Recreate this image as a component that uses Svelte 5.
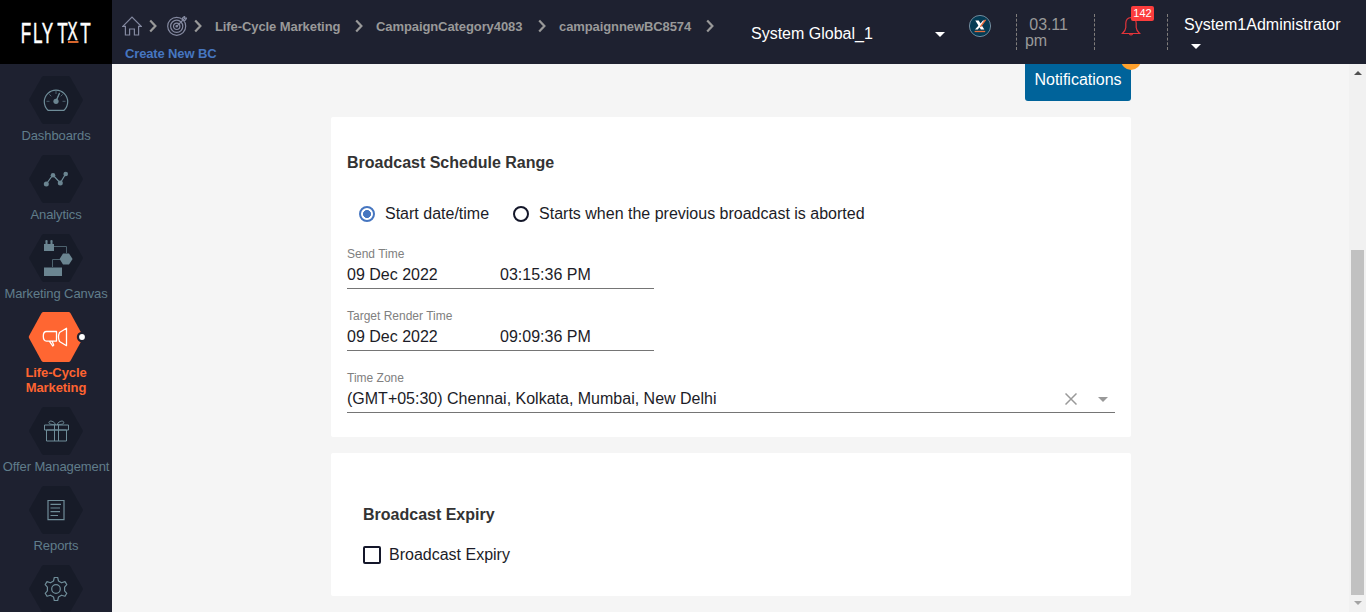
<script>
  const crumbs = [
    { label: 'Life-Cycle Marketing', width: 125 },
    { label: 'CampaignCategory4083', width: 147 },
    { label: 'campaignnewBC8574', width: 132 }
  ];
  const items = [
    { id: 'dash', label: 'Dashboards' },
    { id: 'analytics', label: 'Analytics' },
    { id: 'canvas', label: 'Marketing Canvas' },
    { id: 'life', label: 'Life-Cycle Marketing', active: true },
    { id: 'offer', label: 'Offer Management' },
    { id: 'reports', label: 'Reports' },
    { id: 'settings', label: '' }
  ];
  const times = [
    { label: 'Send Time', date: '09 Dec 2022', time: '03:15:36 PM' },
    { label: 'Target Render Time', date: '09 Dec 2022', time: '09:09:36 PM' }
  ];
</script>

{#snippet chevron()}
  <svg class="chev" width="8" height="14" viewBox="0 0 8 14"><path d="M1.2 1.5 6.4 7 1.2 12.5" /></svg>
{/snippet}

<div class="app">
  <header>
    <div class="logo">
      <svg width="112" height="64" viewBox="0 0 112 64" role="img" aria-label="FLYTXT">
        <text transform="scale(.58 1)" y="43" x="35.9 57 71.9 98.6 116.4 138.3" fill="#fff" stroke="#fff" stroke-width=".5" font-family="Liberation Sans" font-size="29.5">FLYT<tspan y="40" font-size="26">X</tspan><tspan y="43">T</tspan></text>
        <rect x="68" y="41" width="10.5" height="2" fill="#d8662c" />
      </svg>
    </div>
    <nav class="crumbs">
      <div class="trail">
        <svg class="home" width="20" height="20" viewBox="0 0 20 20"><path d="M.8 10.3 10 1l9.2 9.3H16.6V19H12.4V13H7.6v6H3.4V10.3Z" /></svg>
        {@render chevron()}
        <svg class="target" width="20" height="20" viewBox="0 0 20 20"><circle cx="9.7" cy="10.3" r="9" /><circle cx="9.7" cy="10.3" r="6.1" /><circle cx="9.7" cy="10.3" r="3.2" /><circle cx="9.7" cy="10.3" r=".7" /><path d="M9.7 10.3 18 2M15.5 4.2V2L17.6.3V2.2H19.6L18 4.5H15.5" /></svg>
        {@render chevron()}
        {#each crumbs as c}
          <span class="crumb" style:width="{c.width}px">{c.label}</span>
          {@render chevron()}
        {/each}
      </div>
      <div class="current">Create New BC</div>
    </nav>
    <div class="scope"><span>System Global_1</span><i class="caret"></i></div>
    <svg class="badge-x" width="24" height="24" viewBox="0 0 24 24">
      <circle cx="12" cy="12" r="10.6" fill="#043b54" stroke="#70899b" />
      <path d="M7.3 6.5H10.7L16.3 15.5H12.9Z" fill="#fff" />
      <path d="M7 15.5 15 6.5H17.5L9.7 15.5Z" fill="#fff" />
      <path d="M11.8 12.5 16.6 5.8h1.8l-5.4 7.5Z" fill="#e56c3d" />
      <path d="M6.6 17.5H17.2" stroke="#e56c3d" stroke-width="1.3" />
    </svg>
    <div class="clock">&nbsp;03.11 pm</div>
    <div class="bell">
      <svg width="20" height="21" viewBox="0 0 20 21"><path d="M10 1.5C6.5 1.8 4.9 4 4.8 7.3V11.5Q4.7 14.2 1.4 17.5H18.6Q15.3 14.2 15.2 11.5V7.3C15.1 4 13.5 1.8 10 1.5ZM8.4 17.8q1.6 2.4 3.2 0" /></svg>
      <span>142</span>
    </div>
    <div class="user"><span>System1Administrator</span><i class="caret"></i></div>
  </header>

  <div class="body">
    <aside>
      {#each items as it}
        <div class="item" class:active={it.active}>
          <svg class="hex" width="56" height="50" viewBox="0 0 56 50">
            <path class="shape" d={it.active ? 'M15.5 0h25q1.2 0 1.9 1L55 24q.5 1 0 2L42.4 49q-.7 1-1.9 1h-25q-1.2 0-1.9-1L1 26q-.5-1 0-2L13.6 1q.7-1 1.9-1Z' : 'M16 1h24q1.5 0 2.2 1.2L54.6 24q.5 1 0 2L42.2 47.8q-.7 1.2-2.2 1.2H16q-1.5 0-2.2-1.2L1.4 26q-.5-1 0-2L13.8 2.2Q14.5 1 16 1Z'} />
            {#if it.id === 'dash'}
              <path class="l" d="M20 35.3A11.7 11.7 0 1 1 36 35.3Z" /><path class="thin" d="M18.5 26.3h3M34.5 26.3h3M21.3 19.3l2 2M34.7 19.3l-2 2M28 16v3M28 26.3l3.8-8.5" /><circle class="f" cx="28" cy="26.3" r="2.6" /><path class="l" d="m28.5 25 3-7" />
            {:else if it.id === 'analytics'}
              <path class="l" d="m18.3 30 6.6-9 7.4 8 5.4-9.2" />
              <circle class="f" cx="18.3" cy="30" r="2.5" /><circle class="f" cx="25" cy="21.2" r="2.3" /><circle class="f" cx="32.3" cy="29" r="2.5" /><circle class="f" cx="37.7" cy="20" r="2.3" />
            {:else if it.id === 'canvas'}
              <path class="thin" d="M26 13.5H38.5V20M32 26.5H24.5V34" />
              <path class="f" d="M16 11h1.500V9q-.6-2 1-2t1 2v2h3V9q-.6-2 1-2t1 2v2H26v7H16ZM16 34.500H34v8.500H16ZM35 20.500h6L44.600 26 41 31.500H35L31.600 26Z" />
            {:else if it.id === 'life'}
              <path class="l mega" d="M28.5 19.5H18.5q-3.2 0-3.2 4.8t3.2 4.8H28.5ZM21.5 29.3l3.2 4.7 1-1-1.6-3.7M31.5 20.5 38.5 16.3V33.7L31.5 29.5Q29.5 25 31.5 20.5Z" />
              <circle cx="54" cy="25" r="5.2" fill="#1e2130" /><circle cx="54" cy="25" r="2.9" fill="#fff" />
            {:else if it.id === 'offer'}
              <path class="l gift" d="M16.5 19H40.5V24H16.5ZM18.5 24H38.5V35H18.5ZM26.5 19V35M30.5 19V35M27.7 18.5C25 14 20.5 14.5 21 16.8c.2 1.6 3.5 1.8 6.7 1.7M29 18.5C31.7 14 36.2 14.5 35.8 16.8c-.2 1.6-3.5 1.8-6.8 1.7" />
            {:else if it.id === 'reports'}
              <path class="l" d="M20 15.5H36V34.7H20ZM22.5 19.3H33M22.5 23H32M22.5 26.7H32M22.5 30.5H30" />
            {:else}
              <circle class="l" cx="28" cy="25" r="4.3" />
              <path class="l" stroke-linejoin="round" d="M26.3 13.5h3.4l.8 3.6 3 1.7 3.5-1.2 1.8 3-2.2 2.5v3.7l2.2 2.5-1.8 3-3.5-1.1-3 1.7-.8 3.6h-3.4l-.8-3.6-3-1.7-3.5 1.1-1.8-3 2.2-2.5v-3.7l-2.2-2.5 1.8-3 3.5 1.2 3-1.7Z" />
            {/if}
          </svg>
          <div class="name">{it.label}</div>
        </div>
      {/each}
    </aside>

    <main>
      <div class="column">
        <div class="top"><button>Notifications</button><b></b></div>
        <section class="range">
          <h2>Broadcast Schedule Range</h2>
          <div class="radios">
            <label><i class="radio on"></i><span>Start date/time</span></label>
            <label><i class="radio"></i><span>Starts when the previous broadcast is aborted</span></label>
          </div>
          {#each times as t}
            <div class="field short">
              <small>{t.label}</small>
              <div class="value"><span>{t.date}</span><span>{t.time}</span></div>
            </div>
          {/each}
          <div class="field">
            <small>Time Zone</small>
            <div class="value zone">
              <span>(GMT+05:30) Chennai, Kolkata, Mumbai, New Delhi</span>
              <svg width="12" height="12" viewBox="0 0 12 12"><path d="m.5.5 11 11m0-11-11 11" /></svg>
              <i class="caret grey"></i>
            </div>
          </div>
        </section>
        <section class="expiry">
          <h2>Broadcast Expiry</h2>
          <label><i class="check"></i><span>Broadcast Expiry</span></label>
        </section>
      </div>
      <div class="scroll">
        <i class="arrow up"></i>
        <div class="thumb"></div>
        <i class="arrow down"></i>
      </div>
    </main>
  </div>
</div>

<style>
  :global(body) { margin: 0; overflow: hidden; }
  .app { width: 1366px; height: 612px; overflow: hidden; font: 16px/20px "Liberation Sans", Arial, sans-serif; color: #1c1c27; display: flex; flex-direction: column; }
  .app * { box-sizing: border-box; }
  header { height: 64px; flex: none; background: #1e2130; display: flex; align-items: flex-start; color: #fff; }
  .logo { width: 112px; height: 64px; background: #000; flex: none; }
  .logo svg { display: block; }
  .crumbs { width: 639px; padding: 16px 0 0 10px; flex: none; }
  .trail { display: flex; align-items: center; height: 20px; white-space: nowrap; }
  .trail svg { flex: none; fill: none; stroke: #8489a0; stroke-width: 1.2; }
  .trail .chev { stroke: #999; stroke-width: 2.2; margin: 0 9px 0 7px; }
  .target + .chev { margin: 0 13px 0 7px; }
  .target { margin-left: 1px; }
  .crumb { font-weight: bold; font-size: 13px; letter-spacing: -.09px; color: #999; margin-right: 8px; padding-top: 2px; }
  .crumb + .chev { margin-right: 13px; }
  .current { color: #4676c0; font-weight: bold; font-size: 13px; letter-spacing: -.14px; line-height: 16px; margin: 10px 0 0 3px; }
  .scope { width: 194px; display: flex; justify-content: space-between; align-items: center; padding-top: 24px; }
  .caret { display: block; width: 0; height: 0; border: 5px solid transparent; border-top-color: #fff; border-bottom: 0; }
  .badge-x { margin: 14px 0 0 23px; flex: none; }
  .clock { width: 79px; height: 36px; margin: 14px 0 0 24px; padding: 3px 30px 0 8px; border-left: 1px dashed #807d7b; border-right: 1px dashed #807d7b; color: #999; line-height: 16px; letter-spacing: -.1px; flex: none; }
  .bell { width: 73px; height: 36px; margin-top: 14px; border-right: 1px dashed #807d7b; position: relative; flex: none; padding: 2px 0 0 26px; }
  .bell svg { display: block; fill: none; stroke: #e3343a; stroke-width: 1.2; }
  .bell span { position: absolute; left: 36px; top: -8px; width: 23px; height: 15px; border-radius: 2px; background: #fc3d3d; font-size: 11px; line-height: 15px; text-align: center; }
  .user { padding: 15px 0 0 16px; }
  .user .caret { margin: 8px 0 0 7px; }
  .user span { display: block; height: 21px; }
  .body { display: flex; height: 548px; }
  aside { width: 112px; background: #1e2130; flex: none; padding-top: 11px; overflow: hidden; }
  .item { display: flex; flex-direction: column; align-items: center; padding-bottom: 11px; font-size: 13px; line-height: 15px; color: #607d8b; text-align: center; }
  .hex { display: block; margin-bottom: 3px; overflow: visible; }
  .shape { fill: #171b28; }
  .name { min-height: 15px; white-space: nowrap; letter-spacing: -.1px; }
  .active { color: #ff6430; font-weight: bold; }
  .active .name { width: 80px; white-space: normal; }
  .active .shape { fill: #ff6632; }
  .l { fill: none; stroke: #6f8d99; stroke-width: 1.2; }
  .thin { fill: none; stroke: #4d626e; stroke-width: 1; }
  .f { fill: #6b8591; }
  .l.gift { stroke-width: 1; }
  .l.mega { stroke: #fff; stroke-width: 1.3; stroke-linejoin: round; }
  main { flex: 1; background: #f5f5f5; display: flex; justify-content: space-between; }
  .column { width: 800px; margin-left: 219px; }
  .top { display: flex; justify-content: flex-end; height: 53px; position: relative; clip-path: inset(0 -20px 0 0); }
  button { width: 106px; height: 37px; border: 0; border-radius: 0 0 3px 3px; background: #00639a; color: #fff; font: 16px/20px "Liberation Sans", Arial, sans-serif; padding: 0 0 6px; }
  .top b { position: absolute; right: -10px; top: -14px; width: 20px; height: 20px; border-radius: 50%; background: #ffa12d; }
  section { background: #fff; border-radius: 2px; }
  h2 { font-size: 16px; line-height: 20px; margin: 0; color: #333; }
  .range { height: 320px; padding: 36px 16px 0; }
  .radios { display: flex; gap: 24px; padding: 31px 0 0 12px; height: 74px; }
  label { display: flex; align-items: center; height: 20px; }
  .radio { width: 16px; height: 16px; border: 2px solid #14172a; border-radius: 50%; margin-right: 10px; }
  .on { border-color: #4676c0; background: radial-gradient(circle, #4676c0 0 3.7px, #fff 4.3px); }
  .field { height: 42px; border-bottom: 1px solid #757575; margin-bottom: 20px; }
  .short { width: 307px; }
  small { display: block; font-size: 12px; line-height: 14px; color: #808080; }
  .value { display: flex; padding-top: 4px; height: 24px; }
  .short .value span { width: 153px; }
  .zone { align-items: center; }
  .zone span { flex: 1; }
  .zone svg { stroke: #999; stroke-width: 1.5; margin-right: 21px; }
  .grey { border-top-color: #999; margin: 1px 7px 0 0; }
  .expiry { height: 143px; margin-top: 16px; padding: 52px 32px 0; }
  .expiry label { margin-top: 20px; }
  .check { width: 18px; height: 18px; border: 2px solid #14172a; border-radius: 2px; margin-right: 8px; }
  .scroll { width: 17px; background: #f1f1f1; display: flex; flex-direction: column; align-items: center; }
  .arrow { border: 4px solid transparent; width: 0; }
  .up { border-bottom-color: #505050; border-top: 0; margin: 7px 0 175px; }
  .thumb { width: 13px; height: 345px; background: #c1c1c1; }
  .down { border-top-color: #a3a3a3; border-bottom: 0; margin-top: 6px; }
</style>
